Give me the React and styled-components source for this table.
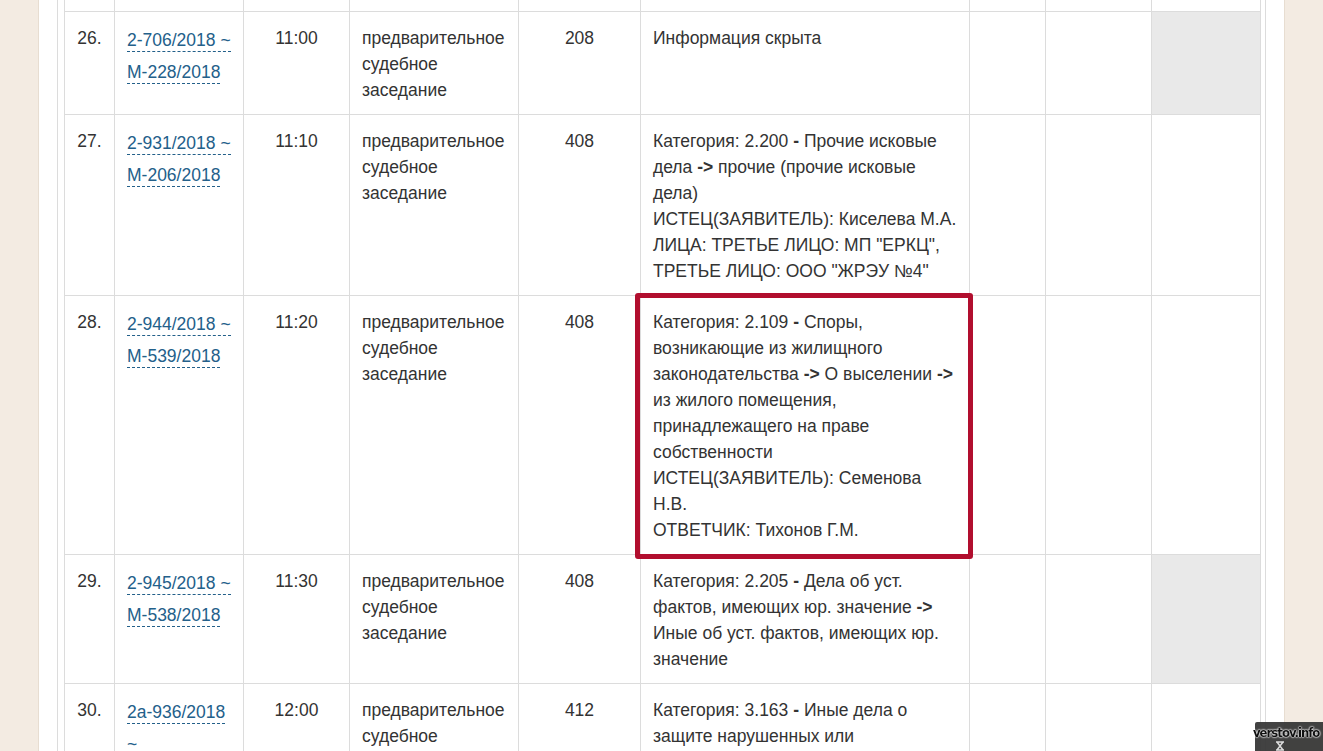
import React from "react";
import styled, { createGlobalStyle, css } from "styled-components";

const GlobalStyle = createGlobalStyle`
    html, body {
        margin: 0;
        padding: 0;
        overflow: hidden;
        background: #f3ebe2;
        font-family: "Liberation Sans", Arial, sans-serif;
        color: #333;
    }
`;

const Page = styled.div`
    display: flex;
    height: 100vh;
`;

const Main = styled.main`
    margin-left: 38px;
    width: 1247px;
    padding: 0 18px;
    box-sizing: border-box;
    background: #fff;
    border-left: 1px solid #e7ddd1;
    border-right: 1px solid #e7ddd1;
`;

const Panel = styled.section`
    height: 100%;
    padding: 0 7px 0 6px;
    border-left: 1px solid #dcdcdc;
    border-right: 1px solid #dcdcdc;
`;

const Table = styled.table`
    width: 1196px;
    table-layout: fixed;
    border-collapse: collapse;
    font-size: 17.5px;
    line-height: 26px;
`;

const Cell = styled.td`
    border: 1px solid #dcdcdc;
    padding: 13px 12px 11px;
    vertical-align: top;
    text-align: ${(p) => (p.$center ? "center" : "left")};
    background: ${(p) => (p.$muted ? "#e9e9e9" : "#fff")};
    ${(p) =>
        p.$sliver &&
        css`
            border-top: none;
            padding: 0;
            height: 11px;
        `}
    ${(p) =>
        p.$highlight &&
        css`
            position: relative;
            &::after {
                content: "";
                position: absolute;
                left: -6px;
                top: -3px;
                right: -4px;
                bottom: -5px;
                border: 5px solid #b10e2e;
                border-radius: 3px;
                pointer-events: none;
            }
        `}
`;

const DescCell = styled(Cell)`
    padding-right: 10px;
`;

const LinkCell = styled(Cell)`
    padding-top: 12px;
    line-height: 32px;
`;

const CaseLink = styled.a`
    color: #23608a;
    text-decoration: none;
    border-bottom: 1px dashed #23608a;
    padding-bottom: 1px;
    cursor: pointer;
`;

const Sep = styled.b`
    font-weight: bold;
`;

const Watermark = styled.div`
    position: fixed;
    right: 0;
    bottom: 0;
    width: 68px;
    height: 29px;
    background: rgba(50, 50, 50, 0.92);
    border-top-left-radius: 2px;
`;

const WatermarkText = styled.span`
    position: absolute;
    left: -2px;
    top: 3px;
    font-family: "DejaVu Sans Condensed", "DejaVu Sans", sans-serif;
    font-weight: bold;
    font-size: 13px;
    letter-spacing: -1px;
    color: #111;
    white-space: nowrap;
    text-shadow: 0 0 1px #fff, 0 0 2px #fff, 0 0 2px #fff;
`;

const WatermarkIcon = styled.svg`
    position: absolute;
    left: 18px;
    bottom: 0;
`;

const rows = [
    {
        n: "26.",
        link: "2-706/2018 ~ М-228/2018",
        time: "11:00",
        kind: "предварительное судебное заседание",
        room: "208",
        desc: ["Информация скрыта"],
        muted: true,
    },
    {
        n: "27.",
        link: "2-931/2018 ~ М-206/2018",
        time: "11:10",
        kind: "предварительное судебное заседание",
        room: "408",
        desc: [
            "Категория: 2.200 - Прочие исковые дела -> прочие (прочие исковые дела)",
            "ИСТЕЦ(ЗАЯВИТЕЛЬ): Киселева М.А.",
            'ЛИЦА: ТРЕТЬЕ ЛИЦО: МП "ЕРКЦ", ТРЕТЬЕ ЛИЦО: ООО "ЖРЭУ №4"',
        ],
    },
    {
        n: "28.",
        link: "2-944/2018 ~ М-539/2018",
        time: "11:20",
        kind: "предварительное судебное заседание",
        room: "408",
        desc: [
            "Категория: 2.109 - Споры, возникающие из жилищного законодательства -> О выселении -> из жилого помещения, принадлежащего на праве собственности",
            "ИСТЕЦ(ЗАЯВИТЕЛЬ): Семенова Н.В.",
            "ОТВЕТЧИК: Тихонов Г.М.",
        ],
        highlight: true,
    },
    {
        n: "29.",
        link: "2-945/2018 ~ М-538/2018",
        time: "11:30",
        kind: "предварительное судебное заседание",
        room: "408",
        desc: [
            "Категория: 2.205 - Дела об уст. фактов, имеющих юр. значение -> Иные об уст. фактов, имеющих юр. значение",
        ],
        muted: true,
    },
    {
        n: "30.",
        link: "2а-936/2018 ~ М-590/2018",
        time: "12:00",
        kind: "предварительное судебное заседание",
        room: "412",
        desc: [
            "Категория: 3.163 - Иные дела о защите нарушенных или оспариваемых прав, свобод и законных интересов",
        ],
    },
];

const widths = [50, 129, 106, 169, 122, 329, 76, 106, 109];

function renderLine(line) {
    return line.split(/( - |->)/).map((part, i) =>
        part === " - " ? (
            <React.Fragment key={i}>
                {" "}
                <Sep>-</Sep>{" "}
            </React.Fragment>
        ) : part === "->" ? (
            <Sep key={i}>-&gt;</Sep>
        ) : (
            part
        )
    );
}

function Description({ lines }) {
    return lines.map((line, i) => (
        <React.Fragment key={i}>
            {i > 0 && <br />}
            {renderLine(line)}
        </React.Fragment>
    ));
}

export default function App() {
    return (
        <Page>
            <GlobalStyle />
            <Main>
                <Panel>
                    <Table>
                        <colgroup>
                            {widths.map((w, i) => (
                                <col key={i} style={{ width: w }} />
                            ))}
                        </colgroup>
                        <tbody>
                            <tr>
                                {widths.map((w, i) => (
                                    <Cell key={i} $sliver />
                                ))}
                            </tr>
                            {rows.map((r) => (
                                <tr key={r.n}>
                                    <Cell $center>{r.n}</Cell>
                                    <LinkCell>
                                        <CaseLink>{r.link}</CaseLink>
                                    </LinkCell>
                                    <Cell $center>{r.time}</Cell>
                                    <Cell>{r.kind}</Cell>
                                    <Cell $center>{r.room}</Cell>
                                    <DescCell $highlight={r.highlight}>
                                        <Description lines={r.desc} />
                                    </DescCell>
                                    <Cell />
                                    <Cell />
                                    <Cell $muted={r.muted} />
                                </tr>
                            ))}
                        </tbody>
                    </Table>
                </Panel>
            </Main>
            <Watermark>
                <WatermarkText>verstov.info</WatermarkText>
                <WatermarkIcon width="14" height="10" viewBox="0 0 14 10">
                    <path d="M3 1h8M4 1l3 4 3-4M4 9l3-4 3 4M3 9h8" stroke="#ddd" strokeWidth="1.5" fill="none" />
                </WatermarkIcon>
            </Watermark>
        </Page>
    );
}
